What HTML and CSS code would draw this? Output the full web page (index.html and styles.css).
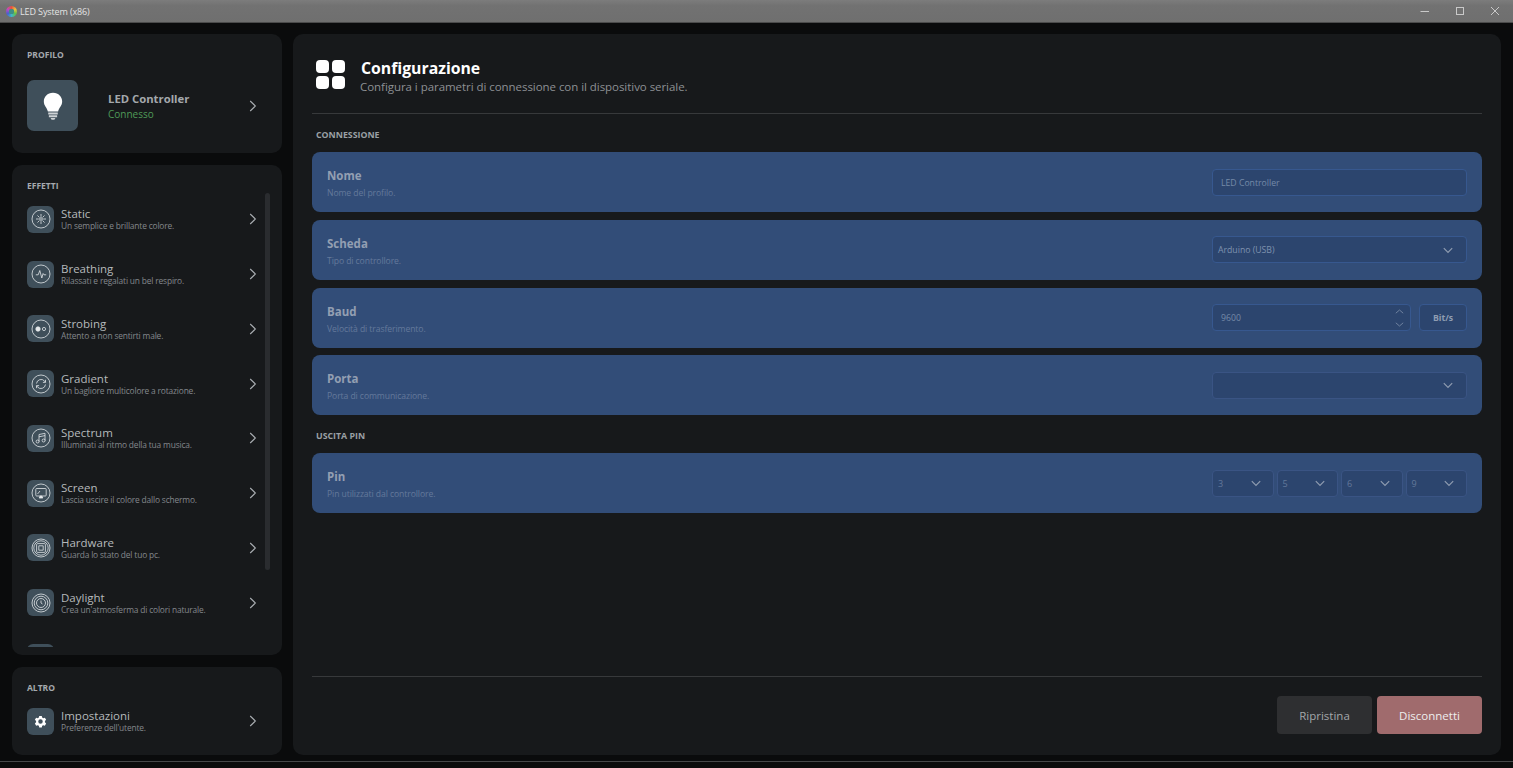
FILE: index.html
```html
<!DOCTYPE html>
<html lang="it">
<head>
<meta charset="utf-8">
<title>LED System (x86)</title>
<link rel="stylesheet" href="styles.css">
</head>
<body>
<svg class="defs" width="0" height="0" aria-hidden="true">
  <defs>
    <symbol id="chev" viewBox="0 0 8 12"><path d="M1.200 1 6.400 6 1.200 11" fill="none" stroke="currentColor" stroke-width="1.100"/></symbol>
    <symbol id="down" viewBox="0 0 10 7"><path d="M.8 1.200 5 5.400 9.200 1.200" fill="none" stroke="currentColor" stroke-width="1.200"/></symbol>
  </defs>
</svg>
<header class="titlebar">
  <span class="logo"></span>
  <span class="wintitle">LED System (x86)</span>
  <div class="winctl">
    <svg width="10" height="10" viewBox="0 0 10 10"><path d="M0.500 5.500H9" stroke="#c9c9c9" fill="none"/></svg>
    <svg width="10" height="10" viewBox="0 0 10 10"><rect x="1.500" y="1.500" width="7" height="7" stroke="#c9c9c9" fill="none"/></svg>
    <svg width="10" height="10" viewBox="0 0 10 10"><path d="M1 1 9 9M9 1 1 9" stroke="#c9c9c9" fill="none"/></svg>
  </div>
</header>
<div class="app">
  <aside class="side">
    <section class="card profile">
      <h2 class="cap">PROFILO</h2>
      <div class="profrow">
        <div class="bigtile">
          <svg width="22" height="30" viewBox="0 0 24 32"><path d="M12 1.500C5.800 1.500 2 6 2 11c0 4.800 3.600 6.800 4.400 11h11.200c.8-4.200 4.400-6.200 4.400-11C22 6 18.200 1.500 12 1.500Z" fill="#fff"/><path d="M6.800 23h10.400v2.400H6.800zM7.500 26h9v2.400h-9zM9.300 29h5.400l-1.200 2h-3z" fill="#cfd3d6"/></svg>
        </div>
        <div class="proftext">
          <div class="profname">LED Controller</div>
          <div class="profstate">Connesso</div>
        </div>
        <svg class="chev" width="8" height="12"><use href="#chev"/></svg>
      </div>
    </section>

    <section class="card effects">
      <h2 class="cap">EFFETTI</h2>
      <div class="list">
        <div class="item"><span class="tile"><svg viewBox="0 0 20 20"><circle cx="10" cy="10" r="9"/><circle cx="10" cy="10" r="1.300"/><path d="M10 5v2.800M10 12.200V15M5 10h2.800M12.200 10H15M6.500 6.500l2 2M11.500 11.500l2 2M13.500 6.500l-2 2M8.500 11.500l-2 2"/></svg></span><span class="itxt"><b>Static</b><small>Un semplice e brillante colore.</small></span><svg class="chev" width="8" height="12"><use href="#chev"/></svg></div>
        <div class="item"><span class="tile"><svg viewBox="0 0 20 20"><circle cx="10" cy="10" r="9"/><path d="M4.800 10.800H7.200L8.800 6.500l2 7.500 1.300-4.500.9 1.300h2.200"/></svg></span><span class="itxt"><b>Breathing</b><small>Rilassati e regalati un bel respiro.</small></span><svg class="chev" width="8" height="12"><use href="#chev"/></svg></div>
        <div class="item"><span class="tile"><svg viewBox="0 0 20 20"><circle cx="10" cy="10" r="9"/><circle cx="7" cy="10" r="2.200" fill="#e6e9eb"/><circle cx="13" cy="10" r="1.600"/></svg></span><span class="itxt"><b>Strobing</b><small>Attento a non sentirti male.</small></span><svg class="chev" width="8" height="12"><use href="#chev"/></svg></div>
        <div class="item"><span class="tile"><svg viewBox="0 0 20 20"><circle cx="10" cy="10" r="9"/><path d="M5.500 9.500a4.600 4.600 0 0 1 8-2.500l1 1.200M14.500 10.500a4.600 4.600 0 0 1-8 2.500l-1-1.200M14.500 5.800v2.600h-2.600M5.500 14.200v-2.600h2.600"/></svg></span><span class="itxt"><b>Gradient</b><small>Un bagliore multicolore a rotazione.</small></span><svg class="chev" width="8" height="12"><use href="#chev"/></svg></div>
        <div class="item"><span class="tile"><svg viewBox="0 0 20 20"><circle cx="10" cy="10" r="9"/><path d="M8 13.500V6.500l6-1.200V12.500M8 8.800l6-1.200"/><circle cx="6.600" cy="13.500" r="1.500"/><circle cx="12.600" cy="12.500" r="1.500"/></svg></span><span class="itxt"><b>Spectrum</b><small>Illuminati al ritmo della tua musica.</small></span><svg class="chev" width="8" height="12"><use href="#chev"/></svg></div>
        <div class="item"><span class="tile"><svg viewBox="0 0 20 20"><circle cx="10" cy="10" r="9"/><rect x="4.800" y="5.500" width="10.400" height="7.500" rx=".8"/><path d="M6.500 11 9 8"/><path d="M8.200 15h3.600l-1-2H9.200Z" fill="#e6e9eb"/></svg></span><span class="itxt"><b>Screen</b><small>Lascia uscire il colore dallo schermo.</small></span><svg class="chev" width="8" height="12"><use href="#chev"/></svg></div>
        <div class="item"><span class="tile"><svg viewBox="0 0 20 20"><circle cx="10" cy="10" r="9"/><circle cx="10" cy="10" r="7.200"/><rect x="5.600" y="5.600" width="8.800" height="8.800" rx="1"/><path d="M7.800 7.800h4.400v4.400H7.800z"/></svg></span><span class="itxt"><b>Hardware</b><small>Guarda lo stato del tuo pc.</small></span><svg class="chev" width="8" height="12"><use href="#chev"/></svg></div>
        <div class="item"><span class="tile"><svg viewBox="0 0 20 20"><circle cx="10" cy="10" r="9"/><circle cx="10" cy="10" r="6.800"/><circle cx="10" cy="10" r="4.500"/><path d="M10 7.500V10l1.500 1"/></svg></span><span class="itxt"><b>Daylight</b><small>Crea un'atmosferma di colori naturale.</small></span><svg class="chev" width="8" height="12"><use href="#chev"/></svg></div>
        <div class="item"><span class="tile"></span></div>
      </div>
      <div class="scrollbar"></div>
    </section>

    <section class="card other">
      <h2 class="cap">ALTRO</h2>
      <div class="item"><span class="tile"><svg class="gear" viewBox="0 0 20 20"><path fill-rule="evenodd" d="M8.300 2.500h3.400l.5 2.100 1.500.9 2.100-.6 1.700 2.900-1.600 1.500v1.800l1.600 1.500-1.700 2.900-2.100-.6-1.500.9-.5 2.100H8.300l-.5-2.100-1.500-.9-2.100.6-1.700-2.900 1.600-1.500V9.300L2.500 7.800l1.700-2.900 2.100.6 1.500-.9ZM10 7a3 3 0 1 0 0 6 3 3 0 0 0 0-6Z"/></svg></span><span class="itxt"><b>Impostazioni</b><small>Preferenze dell'utente.</small></span><svg class="chev" width="8" height="12"><use href="#chev"/></svg></div>
    </section>
  </aside>

  <main class="card main">
    <div class="head">
      <div class="grid4"><i></i><i></i><i></i><i></i></div>
      <div class="headtxt">
        <h1>Configurazione</h1>
        <p>Configura i parametri di connessione con il dispositivo seriale.</p>
      </div>
    </div>
    <h3 class="section first">CONNESSIONE</h3>
    <div class="rows">
      <div class="row">
        <div class="rtxt"><b>Nome</b><small>Nome del profilo.</small></div>
        <div class="ctl field pad">LED Controller</div>
      </div>
      <div class="row">
        <div class="rtxt"><b>Scheda</b><small>Tipo di controllore.</small></div>
        <div class="ctl field select bright">Arduino (USB)<svg class="down" width="10" height="7"><use href="#down"/></svg></div>
      </div>
      <div class="row">
        <div class="rtxt"><b>Baud</b><small>Velocità di trasferimento.</small></div>
        <div class="ctl split">
          <div class="field pad num">9600
            <span class="spin">
              <svg width="9" height="5" viewBox="0 0 9 5"><path d="M.8 4.200 4.500 1l3.700 3.200" fill="none" stroke="#6f829f"/></svg>
              <svg width="9" height="5" viewBox="0 0 9 5"><path d="M.8.800 4.500 4l3.700-3.200" fill="none" stroke="#6f829f"/></svg>
            </span>
          </div>
          <div class="field unit">Bit/s</div>
        </div>
      </div>
      <div class="row">
        <div class="rtxt"><b>Porta</b><small>Porta di communicazione.</small></div>
        <div class="ctl field select dim"><span></span><svg class="down" width="10" height="7"><use href="#down"/></svg></div>
      </div>
    </div>
    <h3 class="section second">USCITA PIN</h3>
    <div class="row">
      <div class="rtxt"><b>Pin</b><small>Pin utilizzati dal controllore.</small></div>
      <div class="ctl pins">
        <div class="field select dim">3<svg class="down" width="10" height="7"><use href="#down"/></svg></div>
        <div class="field select dim">5<svg class="down" width="10" height="7"><use href="#down"/></svg></div>
        <div class="field select dim">6<svg class="down" width="10" height="7"><use href="#down"/></svg></div>
        <div class="field select dim">9<svg class="down" width="10" height="7"><use href="#down"/></svg></div>
      </div>
    </div>
    <div class="foot">
      <button class="btn reset">Ripristina</button>
      <button class="btn disc">Disconnetti</button>
    </div>
  </main>
</div>
<div class="bottomline"></div>
</body>
</html>
```
FILE: styles.css
```css
* { box-sizing: border-box; }
html, body { margin: 0; height: 768px; overflow: hidden; }
body {
  background: #0a0b0c;
  font-family: "Open Sans", "Noto Sans", sans-serif;
  display: flex;
  flex-direction: column;
}
.defs { position: absolute; }

.titlebar {
  height: 23px;
  flex: none;
  background: linear-gradient(#7c7c7c, #727272 25%, #6f6f6f);
  border-bottom: 1px solid #4b4b4b;
  display: flex;
  align-items: center;
  padding-left: 6px;
}
.logo {
  width: 11px;
  height: 11px;
  border-radius: 50%;
  background: radial-gradient(circle, #3f8f86 0 2.600px, transparent 3px),
    conic-gradient(#e8503f, #e8c43f, #5fc24a, #3fb5c9, #4a5fd0, #c04ac0, #e8503f);
}
.wintitle { margin-left: 3px; font-size: 9px; letter-spacing: -.12px; color: #e4e4e4; }
.winctl { margin-left: auto; display: flex; gap: 25px; padding-right: 13px; }

.app {
  flex: none;
  height: 738px;
  display: flex;
  gap: 11px;
  padding: 11px 12px 6px;
}
.card { background: #17191b; border-radius: 10px; }
.side { width: 270px; flex: none; display: flex; flex-direction: column; gap: 12px; }
.cap {
  margin: 0;
  font-size: 8.500px;
  line-height: 12px;
  font-weight: 700;
  color: #a5a9ae;
}

.profile { height: 119px; padding: 15px 15px 0; }
.profrow { display: flex; align-items: center; margin-top: 19px; }
.bigtile {
  width: 51px;
  height: 51px;
  border-radius: 7px;
  background: #3f4f5a;
  display: flex;
  align-items: center;
  justify-content: center;
}
.proftext { margin: 2px 0 0 30px; flex: 1; }
.profname { font-size: 11.300px; line-height: 15px; font-weight: 700; color: #a4a8ac; }
.profstate { font-size: 10px; line-height: 15px; margin-top: 1px; color: #4f9a58; }
.chev { color: #a9adb1; flex: none; margin-right: 10px; }

.effects {
  position: relative;
  flex: none;
  height: 490px;
  padding: 15px 0 8px 15px;
  display: flex;
  flex-direction: column;
}
.list { flex: 1; overflow: hidden; min-height: 0; }
.item { height: 54.750px; display: flex; align-items: center; padding-right: 15px; }
.list .item { padding-right: 0; }
.item .chev { margin-left: auto; margin-right: 10px; }
.list .item .chev { margin-right: 25px; }
.tile {
  width: 27px;
  height: 27px;
  flex: none;
  border-radius: 6px;
  background: #3f4f5a;
  display: flex;
  align-items: center;
  justify-content: center;
}
.tile svg {
  width: 20px;
  height: 20px;
  fill: none;
  stroke: #e2e6e9;
  stroke-width: .8;
}
.tile .gear { width: 15px; height: 15px; fill: #fff; stroke: none; }
.itxt { margin-left: 7px; padding-top: 1px; display: flex; flex-direction: column; }
.itxt b { font-size: 11.500px; line-height: 12px; font-weight: 400; color: #b6b9bc; }
.itxt small { font-size: 8.400px; line-height: 11px; letter-spacing: -.16px; color: #84888c; }
.scrollbar {
  position: absolute;
  left: 253px;
  top: 28px;
  width: 5px;
  height: 377px;
  border-radius: 3px;
  background: #2a2c2f;
}

.other { height: 88px; flex: none; padding: 15px 0 0 15px; }
.other .item { height: 54px; }

.main {
  flex: 1;
  padding: 0 19px;
  display: flex;
  flex-direction: column;
}
.head {
  height: 80px;
  padding: 26px 0 0 4px;
  border-bottom: 1px solid #37393b;
  display: flex;
  gap: 15px;
}
.grid4 { width: 29px; height: 29px; display: grid; grid-template-columns: 13px 13px; grid-auto-rows: 13px; gap: 3px; }
.grid4 i { background: #fff; border-radius: 4px; }
.headtxt { margin-top: -1px; }
h1 { margin: 0 0 0 1px; font-size: 15.800px; line-height: 18px; font-weight: 700; color: #fff; }
.head p { margin: 1px 0 0; font-size: 11.500px; line-height: 18px; letter-spacing: -.05px; color: #8d9094; }

.section { margin: 0; font-size: 8.800px; line-height: 12px; font-weight: 700; color: #9ba0a5; padding-left: 4px; }
.first { margin-top: 15px; margin-bottom: 11px; }
.second { margin-top: 15px; margin-bottom: 11px; }
.rows { display: flex; flex-direction: column; gap: 7.800px; }

.row {
  height: 60px;
  flex: none;
  border-radius: 8px;
  background: #324d78;
  display: flex;
  align-items: center;
  justify-content: space-between;
  padding: 0 15px;
}
.rtxt { display: flex; flex-direction: column; padding-top: 4px; }
.rtxt b { font-size: 11.500px; line-height: 16px; color: #939fb2; font-weight: 700; }
.rtxt small { font-size: 8.600px; line-height: 14px; margin-top: 2px; letter-spacing: -.08px; color: #64799b; }

.ctl { width: 255px; height: 27px; flex: none; }
.field {
  height: 27px;
  background: #2c456e;
  border: 1px solid #37588f;
  border-radius: 4px;
  padding-top: 1px;
  font-size: 8.700px;
  color: #758aa8;
  display: flex;
  align-items: center;
}
.pad { padding-left: 8px; }
.select { justify-content: space-between; padding: 1px 13px 0 5px; }
.select .down { color: #8f9cb0; flex: none; }
.bright { color: #7f92ae; }
.split { display: flex; gap: 8px; }
.num { flex: 1; justify-content: space-between; padding-right: 6px; }
.spin { display: flex; flex-direction: column; gap: 8px; }
.unit { width: 48px; flex: none; justify-content: center; font-weight: 700; color: #8f9db2; }
.pins { display: flex; gap: 3px; }
.pins .field { flex: 1; padding-right: 12px; }
.dim { color: #63789a; font-size: 9px; border-color: #3a5484; }

.foot {
  margin-top: auto;
  height: 79px;
  border-top: 1px solid #37393b;
  display: flex;
  align-items: center;
  justify-content: flex-end;
  gap: 5px;
  padding-bottom: 2px;
}
.btn {
  height: 38px;
  border-radius: 4px;
  border: 0;
  font-family: inherit;
  font-size: 11.500px;
}
.reset { width: 95px; background: #2e2f31; color: #a4a7aa; }
.disc { width: 105px; background: #a06b6d; color: #eee; }
.bottomline { height: 7px; flex: none; border-top: 1px solid #474849; background: #0c0c0c; }
```
